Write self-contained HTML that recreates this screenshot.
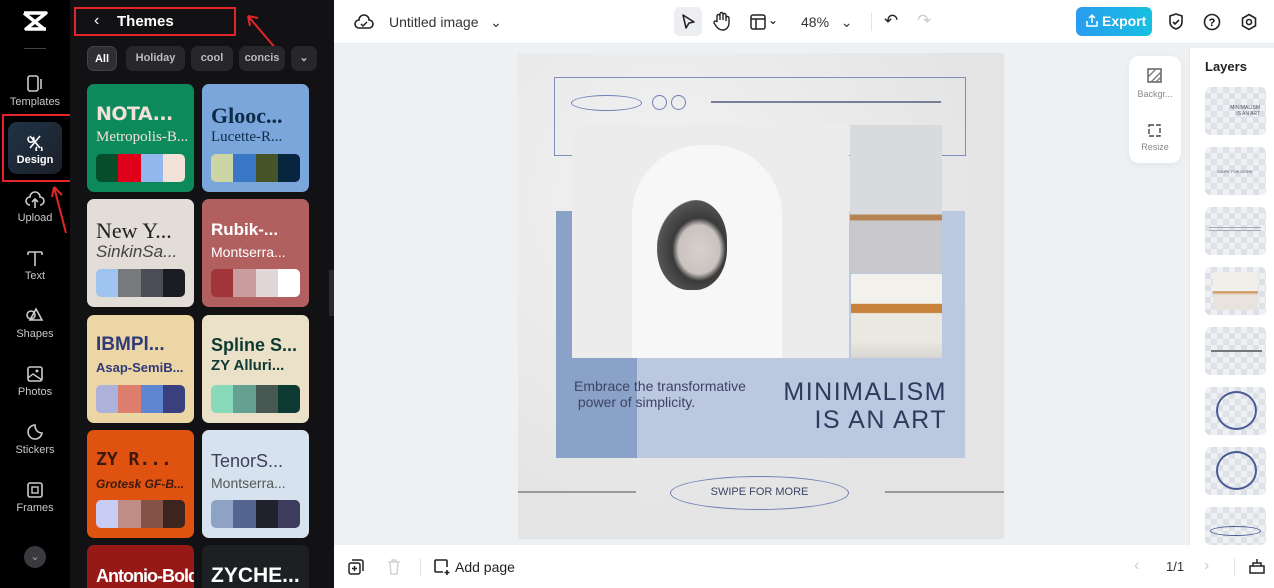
<!DOCTYPE html>
<html><head><meta charset="utf-8"><style>
*{box-sizing:border-box;margin:0;padding:0}
html,body{width:1274px;height:588px;overflow:hidden}
body{font-family:"Liberation Sans",sans-serif;background:#eef1f4;position:relative}
.abs{position:absolute}
#rail{left:0;top:0;width:70px;height:588px;background:#000;overflow:hidden}
.ri{position:absolute;left:0;width:70px;text-align:center;color:#c8c8c8;font-size:11px}
.ri svg{display:block;margin:0 auto 3px}
#panel{left:70px;top:0;width:264px;height:588px;background:#121214;overflow:hidden}
.chip{position:absolute;top:46px;height:25px;border-radius:7px;background:#27272b;color:#bbb;font-size:11px;font-weight:bold;line-height:25px;text-align:center;overflow:hidden}
.card{position:absolute;width:107px;height:108px;border-radius:7px;overflow:hidden}
.card .t1{position:absolute;left:9px;top:19px;font-size:20px;font-weight:bold;white-space:nowrap}
.card .t2{position:absolute;left:9px;top:45px;font-size:14px;white-space:nowrap}
.pal{position:absolute;left:9px;top:70px;width:89px;height:28px;border-radius:5px;overflow:hidden;display:flex}
.pal i{flex:1}
#top{left:334px;top:0;width:940px;height:44px;background:#fff;border-bottom:1px solid #e8ebee}
#bot{left:334px;top:545px;width:940px;height:43px;background:#fff}
#layers{left:1189px;top:48px;width:85px;height:497px;background:#fff;border-left:1px solid #e5e8eb;overflow:hidden}
.ly{position:absolute;left:15px;width:61px;height:48px;border-radius:5px;background:
repeating-conic-gradient(#dde1e6 0 25%,#eef0f3 0 50%) 0 0/12px 12px}
.red{position:absolute;border:2px solid #e3252a}
</style></head><body>
<div id="rail" class="abs">
 <div class="abs" style="left:22px;top:10px">
  <svg width="26" height="22" viewBox="0 0 26 22"><path d="M2 3h22L4 19h20M2 3l20 16" stroke="#fff" stroke-width="3.5" fill="none" stroke-linejoin="round"/></svg></div>
 <div class="abs" style="left:24px;top:48px;width:22px;height:1px;background:#444"></div>
 <div class="ri" style="top:75px"><svg width="20" height="18"><rect x="3" y="1" width="10" height="15" rx="2" stroke="#ccc" stroke-width="1.6" fill="none"/><path d="M16 4v10" stroke="#ccc" stroke-width="1.6"/></svg>Templates</div>
 <div class="abs" style="left:8px;top:122px;width:54px;height:52px;border-radius:9px;background:linear-gradient(135deg,#1f3347,#1c2028)"></div>
 <div class="ri" style="top:133px;color:#fff;font-weight:bold"><svg width="20" height="18"><path d="M5 3l10 12M15 3L5 15M4 4a3 3 0 1 0 4 0M12 14a3 3 0 1 0 4 0" stroke="#fff" stroke-width="1.6" fill="none"/></svg>Design</div>
 <div class="red" style="left:2px;top:114px;width:71px;height:68px"></div>
 <div class="ri" style="top:191px"><svg width="22" height="18"><path d="M6 14a4 4 0 0 1 0-8 5 5 0 0 1 10 0 4 4 0 0 1 0 8M11 8v9M8 11l3-3 3 3" stroke="#ccc" stroke-width="1.6" fill="none"/></svg>Upload</div>
 <div class="ri" style="top:249px"><svg width="20" height="18"><path d="M3 3h14M10 3v14M3 3v3M17 3v3" stroke="#ccc" stroke-width="1.6" fill="none"/></svg>Text</div>
 <div class="ri" style="top:307px"><svg width="20" height="18"><path d="M11 2l6 11H5z" stroke="#ccc" stroke-width="1.6" fill="none"/><circle cx="6" cy="8" r="4" stroke="#ccc" stroke-width="1.6" fill="none"/></svg>Shapes</div>
 <div class="ri" style="top:365px"><svg width="20" height="18"><rect x="3" y="2" width="14" height="14" rx="2" stroke="#ccc" stroke-width="1.6" fill="none"/><path d="M3 13l5-4 9 6" stroke="#ccc" stroke-width="1.4" fill="none"/><circle cx="12" cy="6" r="1.5" fill="#ccc"/></svg>Photos</div>
 <div class="ri" style="top:423px"><svg width="20" height="18"><path d="M10 2a7 7 0 1 0 7 8c-4 0-7-3-7-8z" stroke="#ccc" stroke-width="1.6" fill="none"/></svg>Stickers</div>
 <div class="ri" style="top:481px"><svg width="20" height="18"><rect x="3" y="2" width="14" height="14" rx="2" stroke="#ccc" stroke-width="1.6" fill="none"/><rect x="7" y="6" width="6" height="6" stroke="#ccc" stroke-width="1.4" fill="none"/></svg>Frames</div>
 <div class="abs" style="left:24px;top:546px;width:22px;height:22px;border-radius:50%;background:#3a3a3e;color:#aaa;font-size:11px;text-align:center;line-height:22px">⌄</div>
</div>
<div id="panel" class="abs">
 <div class="abs" style="left:24px;top:12px;color:#fff;font-size:16px">&#8249;</div>
 <div class="abs" style="left:47px;top:13px;color:#fff;font-size:15px;font-weight:bold">Themes</div>
 <div class="red" style="left:4px;top:7px;width:162px;height:29px"></div>
 <svg class="abs" style="left:172px;top:14px" width="40" height="40"><path d="M6 2l29 34M6 2l2 10M6 2l10 2" stroke="#e3252a" stroke-width="2" fill="none"/></svg>
 <div class="chip" style="left:17px;width:30px;background:#2f2f33;color:#fff;border:1px solid #444">All</div>
 <div class="chip" style="left:56px;width:59px">Holiday</div>
 <div class="chip" style="left:121px;width:42px">cool</div>
 <div class="chip" style="left:169px;width:46px">concis</div>
 <div class="chip" style="left:221px;width:26px">⌄</div>
 <div class="card" style="left:17px;top:84px;background:#0d8a5c"><div class="t1" style="color:#f3e0d6;font-weight:900;font-family:'DejaVu Sans';font-size:19px;letter-spacing:-0.5px">NOTA...</div><div class="t2" style="color:#f3e0d6;font-family:'Liberation Serif';font-size:15px">Metropolis-B...</div><div class="pal"><i style="background:#064d2c"></i><i style="background:#e0001a"></i><i style="background:#93b8ef"></i><i style="background:#f3e2d8"></i></div></div>
 <div class="card" style="left:132px;top:84px;background:#7aa6dc"><div class="t1" style="color:#0e2b48;font-family:'Liberation Serif';font-size:22px">Glooc...</div><div class="t2" style="color:#0e2b48;font-family:'Liberation Serif';font-size:15px">Lucette-R...</div><div class="pal"><i style="background:#cdd5a6"></i><i style="background:#3a78c7"></i><i style="background:#465427"></i><i style="background:#07253f"></i></div></div>
 <div class="card" style="left:17px;top:199px;background:#e2ddd6"><div class="t1" style="color:#222;font-weight:normal;font-family:'Liberation Serif';font-size:22px">New Y...</div><div class="t2" style="color:#444;font-style:italic;font-size:17px;top:43px">SinkinSa...</div><div class="pal"><i style="background:#9fc4ef"></i><i style="background:#777a7d"></i><i style="background:#4a4d55"></i><i style="background:#1b1d22"></i></div></div>
 <div class="card" style="left:132px;top:199px;background:#b2605f"><div class="t1" style="color:#fff;font-size:17px;top:21px">Rubik-...</div><div class="t2" style="color:#fff">Montserra...</div><div class="pal"><i style="background:#a2343a"></i><i style="background:#c99c9e"></i><i style="background:#e2d6d7"></i><i style="background:#fff"></i></div></div>
 <div class="card" style="left:17px;top:315px;background:#ecd6a6"><div class="t1" style="color:#303a78;font-size:19px">IBMPl...</div><div class="t2" style="color:#303a78;font-weight:bold;font-size:13px">Asap-SemiB...</div><div class="pal"><i style="background:#acb2da"></i><i style="background:#de7f6d"></i><i style="background:#5f86d0"></i><i style="background:#3a3f7d"></i></div></div>
 <div class="card" style="left:132px;top:315px;background:#ebe1c8"><div class="t1" style="color:#0f3a32;font-size:18px;top:20px">Spline S...</div><div class="t2" style="color:#0f3a32;font-weight:bold;font-size:15px;top:42px">ZY Alluri...</div><div class="pal"><i style="background:#88d9b9"></i><i style="background:#66a091"></i><i style="background:#465851"></i><i style="background:#0d3a32"></i></div></div>
 <div class="card" style="left:17px;top:430px;background:#e0520f"><div class="t1" style="color:#3a1a10;font-size:18px;font-family:'DejaVu Sans Mono'">ZY R...</div><div class="t2" style="color:#3a1a10;font-weight:bold;font-style:italic;font-size:12px;top:47px">Grotesk GF-B...</div><div class="pal"><i style="background:#c8cdf5"></i><i style="background:#c08c86"></i><i style="background:#845247"></i><i style="background:#3c251e"></i></div></div>
 <div class="card" style="left:132px;top:430px;background:#d6e3ef"><div class="t1" style="color:#3e3d5a;font-weight:normal;font-size:18px;top:21px">TenorS...</div><div class="t2" style="color:#555">Montserra...</div><div class="pal"><i style="background:#8ea3c4"></i><i style="background:#556592"></i><i style="background:#21212e"></i><i style="background:#3e3c5e"></i></div></div>
 <div class="card" style="left:17px;top:545px;height:43px;border-radius:7px 7px 0 0;background:#961917"><div class="t1" style="color:#fff;font-size:18px;top:21px;letter-spacing:-1px">Antonio-Bold</div></div>
 <div class="card" style="left:132px;top:545px;height:43px;border-radius:7px 7px 0 0;background:#1d2022"><div class="t1" style="color:#fff;font-size:21px;top:19px;font-weight:900">ZYCHE...</div></div>
 <div class="abs" style="left:259px;top:270px;width:10px;height:46px;border-radius:0 5px 5px 0;background:#2a2a2e"></div>
</div>
<div id="top" class="abs">
 <svg class="abs" style="left:20px;top:13px" width="20" height="18"><path d="M5 15a4 4 0 0 1 0-8 5 5 0 0 1 10 0 4 4 0 0 1 0 8z" stroke="#222" stroke-width="1.6" fill="none"/><path d="M7 11l2 2 4-4" stroke="#222" stroke-width="1.5" fill="none"/></svg>
 <div class="abs" style="left:55px;top:14px;font-size:14px;color:#333">Untitled image &nbsp;&nbsp;⌄</div>
 <div class="abs" style="left:340px;top:7px;width:28px;height:29px;border-radius:6px;background:#eceef2"></div>
 <svg class="abs" style="left:346px;top:13px" width="16" height="18"><path d="M3 2l11 7-5 1-3 5z" stroke="#222" stroke-width="1.6" fill="none" stroke-linejoin="round"/></svg>
 <svg class="abs" style="left:378px;top:11px" width="18" height="20"><path d="M5 11V5a1.5 1.5 0 0 1 3 0v4V3a1.5 1.5 0 0 1 3 0v6V4a1.5 1.5 0 0 1 3 0v6V7a1.5 1.5 0 0 1 3 0v5c0 4-3 7-6 7s-5-1-7-4l-2-3a1.5 1.5 0 0 1 3-1z" stroke="#222" stroke-width="1.4" fill="none"/></svg>
 <svg class="abs" style="left:416px;top:14px" width="16" height="16"><rect x="1" y="1" width="14" height="14" rx="2" stroke="#222" stroke-width="1.5" fill="none"/><path d="M1 5h14M6 5v10" stroke="#222" stroke-width="1.5"/></svg>
 <div class="abs" style="left:434px;top:13px;font-size:12px">⌄</div>
 <div class="abs" style="left:467px;top:14px;font-size:14px;color:#333">48% &nbsp;&nbsp;⌄</div>
 <div class="abs" style="left:537px;top:13px;width:1px;height:18px;background:#e2e4e8"></div>
 <div class="abs" style="left:550px;top:11px;font-size:17px;color:#222">↶</div>
 <div class="abs" style="left:583px;top:11px;font-size:17px;color:#ccc">↷</div>
 <div class="abs" style="left:742px;top:7px;width:76px;height:29px;border-radius:6px;background:linear-gradient(90deg,#2a9cf0,#16c0e0);color:#fff;font-weight:bold;font-size:14px;line-height:29px;padding-left:26px">Export</div>
 <svg class="abs" style="left:751px;top:14px" width="14" height="14"><path d="M2 7v5h10V7M7 9V1M4 4l3-3 3 3" stroke="#fff" stroke-width="1.5" fill="none"/></svg>
 <svg class="abs" style="left:833px;top:12px" width="18" height="20"><path d="M9 2l6 2v6c0 4-3 6-6 7-3-1-6-3-6-7V4z M6 10l2 2 4-4" stroke="#222" stroke-width="1.6" fill="none"/></svg>
 <svg class="abs" style="left:869px;top:13px" width="18" height="18"><circle cx="9" cy="9" r="7.5" stroke="#222" stroke-width="1.6" fill="none"/><text x="9" y="13" font-size="11" font-weight="bold" text-anchor="middle" font-family="Liberation Sans">?</text></svg>
 <svg class="abs" style="left:906px;top:13px" width="18" height="18"><path d="M9 1.5l6.5 3.75v7.5L9 16.5 2.5 12.75v-7.5z" stroke="#222" stroke-width="1.6" fill="none"/><circle cx="9" cy="9" r="2.5" stroke="#222" stroke-width="1.6" fill="none"/></svg>
</div>
<div class="abs" style="left:518px;top:53px;width:486px;height:486px;background:radial-gradient(ellipse at 30% 30%,#f2f2f2,#e4e4e4 70%);overflow:hidden">
 <div class="abs" style="left:36px;top:24px;width:412px;height:79px;border:1.5px solid #7f8dba"></div>
 <div class="abs" style="left:53px;top:42px;width:71px;height:16px;border:1.5px solid #6f7fb4;border-radius:50%"></div>
 <div class="abs" style="left:134px;top:42px;width:15px;height:15px;border:1.5px solid #6f7fb4;border-radius:50%"></div>
 <div class="abs" style="left:153px;top:42px;width:15px;height:15px;border:1.5px solid #6f7fb4;border-radius:50%"></div>
 <div class="abs" style="left:193px;top:48px;width:230px;height:1.5px;background:#7a7f95"></div>
 <div class="abs" style="left:38px;top:158px;width:409px;height:247px;background:#bcc8e0"></div>
 <div class="abs" style="left:38px;top:158px;width:81px;height:247px;background:#8aa2c8"></div>
 <div class="abs" style="left:54px;top:72px;width:277px;height:233px;background:#ececec;overflow:hidden">
  <div class="abs" style="left:60px;top:20px;width:150px;height:220px;border-radius:70px 70px 10px 10px;background:#f7f7f7"></div>
  <div class="abs" style="left:85px;top:75px;width:70px;height:90px;border-radius:45%;background:radial-gradient(ellipse at 60% 55%,#d8d0cc 0,#c9c2be 35%,#3a3a3a 45%,#555 70%,transparent 72%)"></div>
 </div>
 <div class="abs" style="left:332px;top:72px;width:92px;height:148px;background:linear-gradient(#d9dadd 0,#d9dadd 60%,#b58452 61%,#b58452 64%,#c9c9cc 65%,#c9c9cc 100%)"></div>
 <div class="abs" style="left:333px;top:221px;width:91px;height:84px;background:linear-gradient(#f3f1ec 0,#f3f1ec 35%,#c8823c 36%,#c8823c 46%,#ebe8e2 47%,#ebe8e2 80%,#d8d6d0 100%)"></div>
 <div class="abs" style="left:56px;top:325px;font-size:14px;color:#3d4364;line-height:16px">Embrace the transformative<br>&nbsp;power of simplicity.</div>
 <div class="abs" style="right:57px;top:325px;font-size:25px;color:#2f3a5e;letter-spacing:1.5px;text-align:right;line-height:28px">MINIMALISM<br>IS AN ART</div>
 <div class="abs" style="left:0;top:438px;width:118px;height:1.5px;background:#999"></div>
 <div class="abs" style="left:367px;top:438px;width:119px;height:1.5px;background:#999"></div>
 <div class="abs" style="left:152px;top:423px;width:179px;height:34px;border:1.5px solid #6f7fb4;border-radius:50%;text-align:center;line-height:31px;font-size:11px;color:#3d4364">SWIPE FOR MORE</div>
</div>
<div class="abs" style="left:1129px;top:56px;width:52px;height:107px;background:#fff;border-radius:10px;box-shadow:0 2px 8px rgba(0,0,0,.06)">
 <svg class="abs" style="left:18px;top:12px" width="15" height="15"><rect x="1" y="1" width="13" height="13" stroke="#555" stroke-width="1.4" fill="none"/><path d="M1 9l8-8M4 14l10-10M9 14l5-5" stroke="#777" stroke-width="1.3"/></svg>
 <div class="abs" style="left:0;top:33px;width:52px;text-align:center;font-size:9px;color:#888">Backgr...</div>
 <svg class="abs" style="left:18px;top:66px" width="16" height="16"><rect x="2" y="3" width="11" height="11" stroke="#444" stroke-width="1.4" fill="none" stroke-dasharray="5 2"/></svg>
 <div class="abs" style="left:0;top:86px;width:52px;text-align:center;font-size:9px;color:#888">Resize</div>
</div>
<div id="layers" class="abs">
 <div class="abs" style="left:15px;top:11px;font-size:13px;font-weight:bold;color:#222">Layers</div>
 <div class="ly" style="top:39px"><div class="abs" style="right:6px;top:18px;font-size:5px;color:#556;text-align:right">MINIMALISM<br>IS AN ART</div></div>
 <div class="ly" style="top:99px"><div class="abs" style="left:12px;top:22px;font-size:4px;color:#556">SWIPE FOR MORE</div></div>
 <div class="ly" style="top:159px"><div class="abs" style="left:4px;top:20px;width:52px;height:4px;border-top:1px solid #aab;border-bottom:1px solid #aab"></div></div>
 <div class="ly" style="top:219px"><div class="abs" style="left:8px;top:5px;width:45px;height:38px;background:linear-gradient(#f1efea 50%,#c8823c 52%,#e8e4dd 60%)"></div></div>
 <div class="ly" style="top:279px"><div class="abs" style="left:6px;top:23px;width:51px;height:1.5px;background:#777"></div></div>
 <div class="ly" style="top:339px"><div class="abs" style="left:11px;top:4px;width:41px;height:39px;border:2px solid #4a5a94;border-radius:50%"></div></div>
 <div class="ly" style="top:399px"><div class="abs" style="left:11px;top:4px;width:41px;height:39px;border:2px solid #4a5a94;border-radius:50%"></div></div>
 <div class="ly" style="top:459px;height:38px"><div class="abs" style="left:5px;top:19px;width:51px;height:10px;border:1px solid #4a5a94;border-radius:50%"></div></div>
</div>
<div id="bot" class="abs">
 <svg class="abs" style="left:14px;top:14px" width="16" height="16"><rect x="1" y="4" width="11" height="11" rx="2" stroke="#222" stroke-width="1.5" fill="none"/><path d="M4 1h9a2 2 0 0 1 2 2v9M4 9.5h5M6.5 7v5" stroke="#222" stroke-width="1.5" fill="none"/></svg>
 <svg class="abs" style="left:53px;top:14px" width="14" height="16"><path d="M1 3h12M3 3l1 12h6l1-12M5 3V1h4v2" stroke="#ccc" stroke-width="1.3" fill="none"/></svg>
 <div class="abs" style="left:86px;top:13px;width:1px;height:18px;background:#e2e4e8"></div>
 <svg class="abs" style="left:99px;top:13px" width="18" height="18"><path d="M14 9V3a1 1 0 0 0-1-1H3a1 1 0 0 0-1 1v10a1 1 0 0 0 1 1h7M14 12v5M11.5 14.5h5" stroke="#222" stroke-width="1.6" fill="none"/></svg>
 <div class="abs" style="left:121px;top:14px;font-size:14px;color:#222">Add page</div>
 <div class="abs" style="left:800px;top:12px;font-size:16px;color:#ccc">&#8249;</div>
 <div class="abs" style="left:832px;top:14px;font-size:13px;color:#333">1/1</div>
 <div class="abs" style="left:870px;top:12px;font-size:16px;color:#ccc">&#8250;</div>
 <div class="abs" style="left:900px;top:13px;width:1px;height:18px;background:#e2e4e8"></div>
 <svg class="abs" style="left:915px;top:13px" width="16" height="16"><path d="M1 8h14v7H1zM4 8V5h8v3M8 5V1" stroke="#222" stroke-width="1.5" fill="none"/></svg>
</div>
<svg class="abs" style="left:50px;top:185px" width="20" height="50"><path d="M16 48L4 2M4 2l-2 10M4 2l8 8" stroke="#e3252a" stroke-width="2" fill="none"/></svg>
</body></html>
